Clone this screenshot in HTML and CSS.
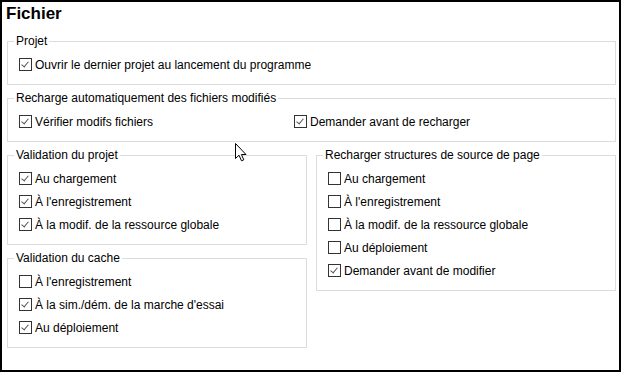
FILE: index.html
```html
<html>
  <head>
    <title>Fichier</title>
    <link rel="stylesheet" href="styles.css">
  </head>
  <body>
    <div class="window">
      <h1 class="pageTitle">Fichier</h1>

      <fieldset class="group">
        <legend>Projet</legend>
        <label class="opt"><span class="box on"></span>Ouvrir le dernier projet au lancement du programme</label>
      </fieldset>

      <fieldset class="group">
        <legend>Recharge automatiquement des fichiers modifiés</legend>
        <div class="pairRow">
          <label class="opt"><span class="box on"></span>Vérifier modifs fichiers</label>
          <label class="opt"><span class="box on"></span>Demander avant de recharger</label>
        </div>
      </fieldset>

      <div class="columns">
        <div class="col">
          <fieldset class="group">
            <legend>Validation du projet</legend>
            <label class="opt"><span class="box on"></span>Au chargement</label>
            <label class="opt"><span class="box on"></span>À l'enregistrement</label>
            <label class="opt"><span class="box on"></span>À la modif. de la ressource globale</label>
          </fieldset>
          <fieldset class="group">
            <legend>Validation du cache</legend>
            <label class="opt"><span class="box"></span>À l'enregistrement</label>
            <label class="opt"><span class="box on"></span>À la sim./dém. de la marche d'essai</label>
            <label class="opt"><span class="box on"></span>Au déploiement</label>
          </fieldset>
        </div>
        <div class="col">
          <fieldset class="group">
            <legend>Recharger structures de source de page</legend>
            <label class="opt"><span class="box"></span>Au chargement</label>
            <label class="opt"><span class="box"></span>À l'enregistrement</label>
            <label class="opt"><span class="box"></span>À la modif. de la ressource globale</label>
            <label class="opt"><span class="box"></span>Au déploiement</label>
            <label class="opt"><span class="box on"></span>Demander avant de modifier</label>
          </fieldset>
        </div>
      </div>

      <!-- mouse pointer left over the dialog -->
      <svg class="cursor" width="14" height="20" viewBox="0 0 14 20">
        <path d="M0.5 0.5 L0.5 15.5 L4 12.2 L6.5 17.8 L8.8 16.8 L6.4 11.5 L11 11.5 Z" fill="#fff" stroke="#000" stroke-width="1" stroke-linejoin="miter"/>
      </svg>
    </div>
  </body>
</html>
```

FILE: styles.css
```css
body {
  margin: 0;
  font-family: "Liberation Sans", Arial, sans-serif;
  font-size: 12px;
  color: #000;
  background-color: #fff;
}

.window {
  position: relative;
  box-sizing: border-box;
  width: 621px;
  height: 372px;
  border: 2px solid #000;
  padding: 0 3px 0 5px;
}

.pageTitle {
  margin: 0 0 0 -1px;
  font-size: 17px;
  font-weight: bold;
  line-height: 24px;
  height: 31px;
}

.group {
  margin: 0 0 5px 0;
  padding: 4px 0 8px 11px;
  border: 1px solid #dcdcdc;
  min-width: 0;
}

.group legend {
  margin-left: -5px;
  padding: 0 2px;
  line-height: 16px;
}

.opt {
  display: flex;
  align-items: center;
  height: 23px;
  white-space: nowrap;
}

.box {
  position: relative;
  box-sizing: border-box;
  width: 13px;
  height: 13px;
  margin-right: 3px;
  border: 1px solid #333;
  background: #fff;
  flex: none;
}

.box.on::after {
  content: "";
  position: absolute;
  left: 3px;
  top: 1px;
  width: 3px;
  height: 6px;
  border-right: 1px solid #555;
  border-bottom: 1px solid #555;
  transform: rotate(40deg);
}

.pairRow {
  display: grid;
  grid-template-columns: 275px 1fr;
}

.columns {
  display: grid;
  grid-template-columns: 300px 1fr;
  column-gap: 9px;
  margin-top: 1px;
}

.cursor {
  position: absolute;
  left: 233px;
  top: 141px;
}
```
